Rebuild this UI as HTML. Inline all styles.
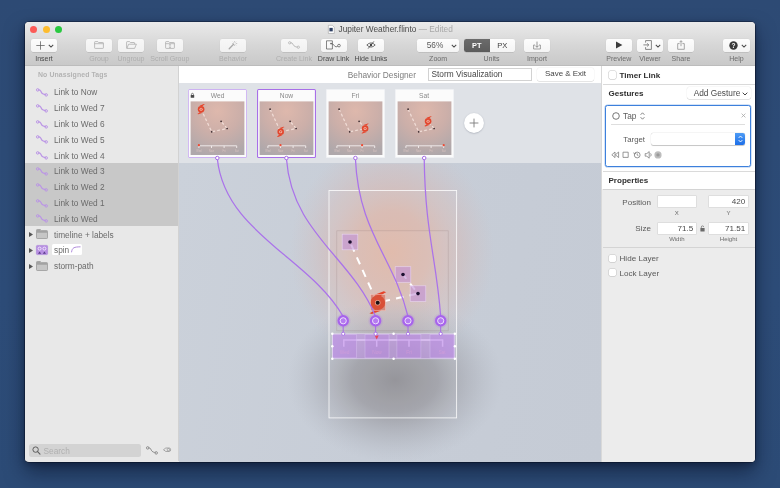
<!DOCTYPE html>
<html><head><meta charset="utf-8"><title>Jupiter Weather.flinto</title>
<style>
*{box-sizing:border-box;margin:0;padding:0}
html,body{width:780px;height:488px;overflow:hidden}
body{background:linear-gradient(180deg,#2d4a74 0%,#2d4c78 60%,#2c4b76 100%);font-family:"Liberation Sans",sans-serif;font-size:8.5px;color:#555;position:relative}
.a{position:absolute}
#win{left:25px;top:22px;width:730px;height:439.6px;border-radius:4px;background:#e9e9e9;box-shadow:0 0 0 .6px rgba(0,0,15,.6),0 10px 20px rgba(3,10,30,.5),0 2px 6px rgba(3,10,30,.35);overflow:hidden}
#in{left:-25px;top:-22px;width:780px;height:488px;will-change:transform}
#tb{left:25px;top:22px;width:730px;height:43.6px;background:linear-gradient(#eaeaea 0%,#d6d6d6 55%,#c9c9c9 100%);border-bottom:.6px solid #bcbcbc}
.tl{width:7.2px;height:7.2px;border-radius:50%;top:25.5px}
.btn{top:39px;height:12.6px;background:linear-gradient(#fdfdfd,#f4f4f4);border-radius:2.2px;box-shadow:0 .5px .6px rgba(0,0,0,.14),0 0 0 .4px rgba(0,0,0,.03)}
.btn.d{background:linear-gradient(#f7f7f7,#f1f1f1)}
.lbl{top:53.5px;width:70px;text-align:center;font-size:7.05px;color:#4a4a4a;white-space:nowrap;line-height:10px}
.lbl.d{color:#aeaeae}
.lbl.m{color:#6c6c6c}
#side{left:25px;top:65.6px;width:153.5px;height:395px;background:#e8e8e8;border-right:1px solid #d2d2d2}
.row{z-index:2;left:25px;width:153px;height:15.75px;line-height:16.4px;font-size:8.3px;color:#6a6a6a;padding-left:29px;white-space:nowrap}
#sel{left:25px;top:163.25px;width:153px;height:63px;background:#c8c8c8}
svg{position:absolute;overflow:visible}
.t{white-space:nowrap}
</style></head><body>
<div id="win" class="a"><div id="in" class="a">
<div id="tb" class="a"></div>
<div class="a tl" style="left:30.3px;background:#fc5b57"></div>
<div class="a tl" style="left:42.6px;background:#fdbc2e"></div>
<div class="a tl" style="left:54.6px;background:#29c940"></div>
<svg class="a" style="left:328.3px;top:24.8px" width="6.6" height="8.8" viewBox="0 0 6 8"><path d="M.3.3h3.7l1.7 1.7v5.7H.3z" fill="#fff" stroke="#9a9a9a" stroke-width=".5"/><rect x="1.3" y="2.6" width="3" height="3.2" fill="#2e3f63"/></svg>
<div class="a t" style="left:338.6px;top:24.2px;font-size:8.3px;color:#4c4c4c;line-height:11px">Jupiter Weather.flinto <span style="color:#a8a8a8">— Edited</span></div>
<div class="a btn" style="left:31px;width:26.0px"></div>
<div class="a lbl" style="left:9.0px">Insert</div>
<div class="a btn d" style="left:86px;width:26.0px"></div>
<div class="a lbl d" style="left:64.0px">Group</div>
<div class="a btn d" style="left:118px;width:26.0px"></div>
<div class="a lbl d" style="left:96.0px">Ungroup</div>
<div class="a btn d" style="left:156.5px;width:26.5px"></div>
<div class="a lbl d" style="left:134.8px">Scroll Group</div>
<div class="a btn d" style="left:220px;width:26.0px"></div>
<div class="a lbl d" style="left:198.0px">Behavior</div>
<div class="a btn d" style="left:281px;width:26.0px"></div>
<div class="a lbl d" style="left:259.0px">Create Link</div>
<div class="a btn" style="left:320.5px;width:26.0px"></div>
<div class="a lbl" style="left:298.5px">Draw Link</div>
<div class="a btn" style="left:357.7px;width:26.3px"></div>
<div class="a lbl" style="left:335.9px">Hide Links</div>
<div class="a btn" style="left:416.7px;width:42.8px"></div>
<div class="a lbl m" style="left:403.1px">Zoom</div>
<div class="a btn" style="left:464px;width:51.0px"></div>
<div class="a lbl m" style="left:456.5px">Units</div>
<div class="a btn" style="left:524px;width:26.0px"></div>
<div class="a lbl m" style="left:502.0px">Import</div>
<div class="a btn" style="left:605.6px;width:26.4px"></div>
<div class="a lbl m" style="left:583.8px">Preview</div>
<div class="a btn" style="left:637px;width:26.0px"></div>
<div class="a lbl m" style="left:615.0px">Viewer</div>
<div class="a btn" style="left:668px;width:26.0px"></div>
<div class="a lbl m" style="left:646.0px">Share</div>
<div class="a btn" style="left:723px;width:26.7px"></div>
<div class="a lbl m" style="left:701.4px">Help</div>
<svg class="a" style="left:35.50px;top:40.80px" width="9" height="9" viewBox="0 0 9 9"><path d="M4.5 .3V8.7M.3 4.5H8.7" stroke="#5e5e5e" stroke-width=".75"/></svg>
<svg class="a" style="left:48.30px;top:43.50px" width="6" height="4" viewBox="0 0 6 4"><path d="M.8.8L3 3L5.2.8" fill="none" stroke="#4a4a4a" stroke-width="1.05"/></svg>
<svg class="a" style="left:94.00px;top:41.20px" width="10" height="8" viewBox="0 0 10 8"><path d="M.6 1.2Q.6.6 1.2.6H3.8L4.6 1.5H8.8Q9.4 1.5 9.4 2.1V6.8Q9.4 7.4 8.8 7.4H1.2Q.6 7.4 .6 6.8ZM.6 2.7H9.4" fill="none" stroke="#a9a9a9" stroke-width=".75"/></svg>
<svg class="a" style="left:125.50px;top:41.20px" width="11" height="8" viewBox="0 0 11 8"><path d="M.9 7.4Q.6 7.4 .6 6.8V1.2Q.6.6 1.2.6H3.6L4.4 1.5H8Q8.6 1.5 8.6 2.1V3.2M.9 7.4L2.6 3.2H10.4L8.6 7.4Z" fill="none" stroke="#a9a9a9" stroke-width=".75" stroke-linejoin="round"/></svg>
<svg class="a" style="left:165.00px;top:41.20px" width="10" height="8" viewBox="0 0 10 8"><path d="M.6 1.2Q.6.6 1.2.6H3.8L4.6 1.5H8.8Q9.4 1.5 9.4 2.1V6.8Q9.4 7.4 8.8 7.4H1.2Q.6 7.4 .6 6.8ZM.6 2.7H9.4" fill="none" stroke="#a9a9a9" stroke-width=".75"/><path d="M5 3.4V6.8M3.9 4.3L5 3.3L6.1 4.3M3.9 5.9L5 6.9L6.1 5.9" fill="none" stroke="#a9a9a9" stroke-width=".6"/></svg>
<svg class="a" style="left:228.00px;top:40.20px" width="10" height="10" viewBox="0 0 10 10"><path d="M1.2 8.8L5.6 4.2" stroke="#a9a9a9" stroke-width="1.3" stroke-linecap="round"/><path d="M6.6 1V2.4M6.6 4.6V6M4.2 3.5H5.4M7.8 3.5H9.2M4.9 1.8L5.6 2.5M8.3 1.8L7.6 2.5M8.3 5.2L7.6 4.5" stroke="#a9a9a9" stroke-width=".6"/></svg>
<svg class="a" style="left:288.00px;top:41.20px" width="12" height="8" viewBox="0 0 12 8"><path d="M2.6 1.8C5.2 1.6 4.6 3.8 6 4.8S8.2 5.9 9.3 6.1" fill="none" stroke="#a9a9a9" stroke-width=".8"/><circle cx="1.7" cy="1.8" r="1.15" fill="none" stroke="#a9a9a9" stroke-width=".7"/><circle cx="10.3" cy="6.2" r="1.15" fill="none" stroke="#a9a9a9" stroke-width=".7"/></svg>
<svg class="a" style="left:326.30px;top:40.20px" width="15" height="10" viewBox="0 0 15 10"><path d="M.5 .8H6.4V9H.5Z" fill="none" stroke="#555" stroke-width=".7"/><path d="M5.2 3.6C8 3.4 8 6.8 10 6.8S11.2 6 11.8 5.8" fill="none" stroke="#555" stroke-width=".7"/><circle cx="13" cy="5.6" r="1.35" fill="none" stroke="#555" stroke-width=".7"/><circle cx="5" cy="3.6" r=".8" fill="#555"/></svg>
<svg class="a" style="left:366.00px;top:41.20px" width="10" height="8" viewBox="0 0 10 8"><path d="M.8 4Q5 -.2 9.2 4Q5 8.2 .8 4Z" fill="none" stroke="#444" stroke-width=".75"/><circle cx="5" cy="4" r="1.2" fill="#444"/><path d="M7.9 .4L2.1 7.6" stroke="#444" stroke-width=".8"/></svg>
<div class="a t" style="left:418px;top:40px;width:34px;text-align:center;font-size:8.3px;color:#5a5a5a;line-height:11px">56%</div>
<svg class="a" style="left:450.60px;top:43.50px" width="6" height="4" viewBox="0 0 6 4"><path d="M.8.8L3 3L5.2.8" fill="none" stroke="#4a4a4a" stroke-width="1.05"/></svg>
<div class="a t" style="left:464px;top:39px;width:25.7px;height:12.6px;border-radius:2.2px 0 0 2.2px;background:linear-gradient(#6b6b6b,#5c5c5c);color:#fff;font-weight:bold;font-size:7.4px;line-height:13.6px;text-align:center">PT</div>
<div class="a t" style="left:489.7px;top:39px;width:25.3px;height:12.6px;color:#3e3e3e;font-size:7.6px;line-height:13.6px;text-align:center">PX</div>
<svg class="a" style="left:533.00px;top:40.80px" width="8" height="9" viewBox="0 0 8 9"><path d="M.6 4V8H7.4V4M2 4H.6M6 4H7.4" fill="none" stroke="#7e7e7e" stroke-width=".7"/><path d="M4 .6V6.2M2.3 4.6L4 6.3L5.7 4.6" fill="none" stroke="#7e7e7e" stroke-width=".8"/></svg>
<svg class="a" style="left:615.00px;top:41.30px" width="8" height="8" viewBox="0 0 8 8"><path d="M1 .6L7.4 4L1 7.4Z" fill="#3c3c3c"/></svg>
<svg class="a" style="left:642.80px;top:40.30px" width="9" height="10" viewBox="0 0 9 10"><path d="M2.6 2.6V.6H8.4V9.4H2.6V7.2" fill="none" stroke="#6a6a6a" stroke-width=".8"/><path d="M.4 4.9H5.6M4.2 3.4L5.8 4.9L4.2 6.4" fill="none" stroke="#6a6a6a" stroke-width=".8"/></svg>
<svg class="a" style="left:654.60px;top:43.50px" width="6" height="4" viewBox="0 0 6 4"><path d="M.8.8L3 3L5.2.8" fill="none" stroke="#4a4a4a" stroke-width="1.05"/></svg>
<svg class="a" style="left:677.00px;top:40.00px" width="8" height="10" viewBox="0 0 8 10"><path d="M2.6 3.6H.7V9.3H7.3V3.6H5.4" fill="none" stroke="#8a8a8a" stroke-width=".75"/><path d="M4 6.2V.8M2.5 2.2L4 .7L5.5 2.2" fill="none" stroke="#8a8a8a" stroke-width=".75"/></svg>
<svg class="a" style="left:728.50px;top:40.80px" width="9" height="9" viewBox="0 0 9 9"><circle cx="4.5" cy="4.5" r="4.2" fill="#3a3a3a"/><text x="4.5" y="7" font-size="6.6" font-weight="bold" font-family="Liberation Sans,sans-serif" fill="#fff" text-anchor="middle">?</text></svg>
<svg class="a" style="left:741.30px;top:43.50px" width="6" height="4" viewBox="0 0 6 4"><path d="M.8.8L3 3L5.2.8" fill="none" stroke="#4a4a4a" stroke-width="1.05"/></svg>
<div id="side" class="a"></div><div id="sel" class="a"></div>
<div class="a t" style="left:38px;top:70px;font-size:6.9px;font-weight:bold;color:#b3b3b3;line-height:10px;letter-spacing:.1px">No Unassigned Tags</div>
<div class="a row" style="top:84.40px">Link to Now</div>
<div class="a row" style="top:100.20px">Link to Wed 7</div>
<div class="a row" style="top:116.00px">Link to Wed 6</div>
<div class="a row" style="top:131.80px">Link to Wed 5</div>
<div class="a row" style="top:147.60px">Link to Wed 4</div>
<div class="a row" style="top:163.40px">Link to Wed 3</div>
<div class="a row" style="top:179.20px">Link to Wed 2</div>
<div class="a row" style="top:195.00px">Link to Wed 1</div>
<div class="a row" style="top:210.80px">Link to Wed</div>
<div class="a row" style="top:226.60px">timeline + labels</div>
<div class="a row" style="top:242.40px">spin</div>
<div class="a row" style="top:258.20px">storm-path</div>
<svg class="a" style="left:36px;top:88.0px" width="12" height="9" viewBox="0 0 12 9"><path d="M2.6 1.8C5.2 1.6 4.6 4 6 5.2S8.2 6.3 9.3 6.6" fill="none" stroke="#bb95e6" stroke-width="1.2" stroke-linecap="round"/><circle cx="1.7" cy="1.9" r="1.25" fill="none" stroke="#bb95e6" stroke-width="1"/><circle cx="10.2" cy="6.9" r="1.25" fill="none" stroke="#bb95e6" stroke-width="1"/></svg>
<svg class="a" style="left:36px;top:103.8px" width="12" height="9" viewBox="0 0 12 9"><path d="M2.6 1.8C5.2 1.6 4.6 4 6 5.2S8.2 6.3 9.3 6.6" fill="none" stroke="#bb95e6" stroke-width="1.2" stroke-linecap="round"/><circle cx="1.7" cy="1.9" r="1.25" fill="none" stroke="#bb95e6" stroke-width="1"/><circle cx="10.2" cy="6.9" r="1.25" fill="none" stroke="#bb95e6" stroke-width="1"/></svg>
<svg class="a" style="left:36px;top:119.6px" width="12" height="9" viewBox="0 0 12 9"><path d="M2.6 1.8C5.2 1.6 4.6 4 6 5.2S8.2 6.3 9.3 6.6" fill="none" stroke="#bb95e6" stroke-width="1.2" stroke-linecap="round"/><circle cx="1.7" cy="1.9" r="1.25" fill="none" stroke="#bb95e6" stroke-width="1"/><circle cx="10.2" cy="6.9" r="1.25" fill="none" stroke="#bb95e6" stroke-width="1"/></svg>
<svg class="a" style="left:36px;top:135.4px" width="12" height="9" viewBox="0 0 12 9"><path d="M2.6 1.8C5.2 1.6 4.6 4 6 5.2S8.2 6.3 9.3 6.6" fill="none" stroke="#bb95e6" stroke-width="1.2" stroke-linecap="round"/><circle cx="1.7" cy="1.9" r="1.25" fill="none" stroke="#bb95e6" stroke-width="1"/><circle cx="10.2" cy="6.9" r="1.25" fill="none" stroke="#bb95e6" stroke-width="1"/></svg>
<svg class="a" style="left:36px;top:151.20000000000002px" width="12" height="9" viewBox="0 0 12 9"><path d="M2.6 1.8C5.2 1.6 4.6 4 6 5.2S8.2 6.3 9.3 6.6" fill="none" stroke="#bb95e6" stroke-width="1.2" stroke-linecap="round"/><circle cx="1.7" cy="1.9" r="1.25" fill="none" stroke="#bb95e6" stroke-width="1"/><circle cx="10.2" cy="6.9" r="1.25" fill="none" stroke="#bb95e6" stroke-width="1"/></svg>
<svg class="a" style="left:36px;top:167.0px" width="12" height="9" viewBox="0 0 12 9"><path d="M2.6 1.8C5.2 1.6 4.6 4 6 5.2S8.2 6.3 9.3 6.6" fill="none" stroke="#bb95e6" stroke-width="1.2" stroke-linecap="round"/><circle cx="1.7" cy="1.9" r="1.25" fill="none" stroke="#bb95e6" stroke-width="1"/><circle cx="10.2" cy="6.9" r="1.25" fill="none" stroke="#bb95e6" stroke-width="1"/></svg>
<svg class="a" style="left:36px;top:182.8px" width="12" height="9" viewBox="0 0 12 9"><path d="M2.6 1.8C5.2 1.6 4.6 4 6 5.2S8.2 6.3 9.3 6.6" fill="none" stroke="#bb95e6" stroke-width="1.2" stroke-linecap="round"/><circle cx="1.7" cy="1.9" r="1.25" fill="none" stroke="#bb95e6" stroke-width="1"/><circle cx="10.2" cy="6.9" r="1.25" fill="none" stroke="#bb95e6" stroke-width="1"/></svg>
<svg class="a" style="left:36px;top:198.6px" width="12" height="9" viewBox="0 0 12 9"><path d="M2.6 1.8C5.2 1.6 4.6 4 6 5.2S8.2 6.3 9.3 6.6" fill="none" stroke="#bb95e6" stroke-width="1.2" stroke-linecap="round"/><circle cx="1.7" cy="1.9" r="1.25" fill="none" stroke="#bb95e6" stroke-width="1"/><circle cx="10.2" cy="6.9" r="1.25" fill="none" stroke="#bb95e6" stroke-width="1"/></svg>
<svg class="a" style="left:36px;top:214.4px" width="12" height="9" viewBox="0 0 12 9"><path d="M2.6 1.8C5.2 1.6 4.6 4 6 5.2S8.2 6.3 9.3 6.6" fill="none" stroke="#bb95e6" stroke-width="1.2" stroke-linecap="round"/><circle cx="1.7" cy="1.9" r="1.25" fill="none" stroke="#bb95e6" stroke-width="1"/><circle cx="10.2" cy="6.9" r="1.25" fill="none" stroke="#bb95e6" stroke-width="1"/></svg>
<svg class="a" style="left:29.3px;top:231.90000000000003px" width="4" height="5" viewBox="0 0 4 5"><path d="M0 0L4 2.5L0 5Z" fill="#555"/></svg>
<svg class="a" style="left:36px;top:229.40000000000003px" width="12" height="10" viewBox="0 0 12 10"><path d="M.5 1.2Q.5.5 1.2.5H4.4L5.4 1.6H10.8Q11.5 1.6 11.5 2.3V8.8Q11.5 9.5 10.8 9.5H1.2Q.5 9.5 .5 8.8Z" fill="#c6c6c6" stroke="#9a9a9a" stroke-width=".8"/><path d="M.9 1.3Q.9.9 1.3.9H4.2L5.2 2H10.7Q11.1 2 11.1 2.4V3.8H.9Z" fill="#a2a2a2"/></svg>
<svg class="a" style="left:29.3px;top:247.70000000000002px" width="4" height="5" viewBox="0 0 4 5"><path d="M0 0L4 2.5L0 5Z" fill="#555"/></svg>
<svg class="a" style="left:29.3px;top:263.50000000000006px" width="4" height="5" viewBox="0 0 4 5"><path d="M0 0L4 2.5L0 5Z" fill="#555"/></svg>
<svg class="a" style="left:36px;top:261.00000000000006px" width="12" height="10" viewBox="0 0 12 10"><path d="M.5 1.2Q.5.5 1.2.5H4.4L5.4 1.6H10.8Q11.5 1.6 11.5 2.3V8.8Q11.5 9.5 10.8 9.5H1.2Q.5 9.5 .5 8.8Z" fill="#c6c6c6" stroke="#9a9a9a" stroke-width=".8"/><path d="M.9 1.3Q.9.9 1.3.9H4.2L5.2 2H10.7Q11.1 2 11.1 2.4V3.8H.9Z" fill="#a2a2a2"/></svg>
<svg class="a" style="left:36px;top:245.20000000000002px" width="12" height="10" viewBox="0 0 12 10"><rect x=".4" y=".4" width="11.2" height="9.2" rx="1" fill="#b78fe2" stroke="#a77fd6" stroke-width=".6"/><g fill="none" stroke="#f3eafc" stroke-width=".9"><circle cx="3.6" cy="3.6" r="1.5"/><circle cx="8.4" cy="3.6" r="1.5"/></g><path d="M2 8.8L3.6 6.4L5.2 8.8ZM6.8 8.8L8.4 6.4L10 8.8Z" fill="#5a3d8a"/></svg>
<div class="a" style="left:51.5px;top:244.3px;width:30.5px;height:11.2px;background:#fff;border-radius:1.5px"></div>
<svg class="a" style="left:71px;top:245.9px" width="10" height="7" viewBox="0 0 10 7"><path d="M.5 6.3C1.2 1.5 3 1 9.5 .8" fill="none" stroke="#a77fd6" stroke-width=".9"/></svg>
<div class="a" style="left:29.3px;top:444px;width:112px;height:12.6px;background:#d3d3d3;border-radius:2.5px"></div>
<svg class="a" style="left:32.3px;top:446.2px" width="9" height="9" viewBox="0 0 9 9"><circle cx="3.6" cy="3.6" r="2.7" fill="none" stroke="#5e5e5e" stroke-width="1"/><path d="M5.6 5.7L8 8.2" stroke="#5e5e5e" stroke-width="1.1" stroke-linecap="round"/></svg>
<div class="a t" style="left:43.5px;top:445.8px;font-size:8.3px;color:#b0b0b0;line-height:10px">Search</div>
<svg class="a" style="left:146px;top:446px" width="12" height="9" viewBox="0 0 12 9"><path d="M2.6 1.8C5.2 1.6 4.6 4 6 5.2S8.2 6.3 9.3 6.6" fill="none" stroke="#8e8e8e" stroke-width="1.0" stroke-linecap="round"/><circle cx="1.7" cy="1.9" r="1.25" fill="none" stroke="#8e8e8e" stroke-width="1"/><circle cx="10.2" cy="6.9" r="1.25" fill="none" stroke="#8e8e8e" stroke-width="1"/></svg>
<svg class="a" style="left:163.2px;top:447.4px" width="8.2" height="5.8" viewBox="0 0 10 7"><path d="M.6 3.3L3.4 1.2H7.6Q9.3 1.2 9.3 3.3T7.6 5.4H3.4Z" fill="none" stroke="#8e8e8e" stroke-width=".9" stroke-linejoin="round"/><circle cx="6.6" cy="3.3" r="1.5" fill="none" stroke="#8e8e8e" stroke-width=".8"/></svg>
<div class="a" style="left:178.5px;top:65.6px;width:423px;height:17.9px;background:#fff"></div>
<div class="a" style="left:178.5px;top:83.4px;width:423px;height:80px;background:#dfe2e7"></div>
<div class="a" id="cv" style="left:178.5px;top:163.4px;width:423px;height:299px;background:linear-gradient(100deg,#cbd1da 0%,#c7cdd7 50%,#c5cbd5 100%)"></div>
<div class="a t" style="left:316px;top:69.6px;width:100px;text-align:right;font-size:8.3px;color:#7d7d7d;line-height:11px">Behavior Designer</div>
<div class="a t" style="left:428px;top:67.9px;width:103.5px;height:13px;border:.6px solid #d2d2d2;background:#fff;font-size:8.3px;color:#444;line-height:11.8px;padding-left:2.5px">Storm Visualization</div>
<div class="a t" style="left:537px;top:68px;width:57px;height:12.8px;border-radius:2px;background:#fff;box-shadow:0 .4px .6px rgba(0,0,0,.16),0 0 0 .4px rgba(0,0,0,.06);font-size:7.95px;color:#444;line-height:12.8px;text-align:center">Save &amp; Exit</div>
<svg width="0" height="0" style="left:0;top:0"><defs><radialGradient id="tg" cx=".5" cy=".18" r=".85"><stop offset="0" stop-color="#deb8ac"/><stop offset=".5" stop-color="#ccafa9"/><stop offset="1" stop-color="#afa8ab"/></radialGradient></defs></svg>
<div class="a" style="left:188.2px;top:89px;width:59px;height:68.5px;background:#fbfbfb;border-radius:1.5px;box-shadow:inset 0 0 0 0.9px #cdb2f2"></div>
<div class="a t" style="left:188.2px;top:90.6px;width:59px;text-align:center;font-size:6.7px;color:#8a8a8a;line-height:10px">Wed</div>
<svg class="a" style="left:188.2px;top:89px" width="59" height="69" viewBox="0 0 59 69"><rect x="2.6" y="12.4" width="53.8" height="53.6" fill="url(#tg)"/><path d="M13.1 20.2L23.7 42.8L39.1 39.5L33.1 32.3" fill="none" stroke="#f0dcd6" stroke-width="1.25" stroke-dasharray="2.9 2.2"/><circle cx="23.7" cy="42.8" r=".85" fill="#3a2a2e"/><circle cx="33.1" cy="32.3" r=".85" fill="#3a2a2e"/><circle cx="39.1" cy="39.5" r=".85" fill="#3a2a2e"/><g transform="translate(13.1 20.2) scale(1.12)"><path d="M-1.5 -3.1L2.4 -4.55L3.35 -4.2C2.4 -3.8 1.7 -3.3 1.1 -2.5ZM1.5 3.1L-2.4 4.55L-3.35 4.2C-2.4 3.8 -1.7 3.3 -1.1 2.5Z" fill="#e8452c"/><circle r="2.95" fill="#e2472e"/><circle r="1.4" fill="#f3b3a3"/><circle r=".65" fill="#e2472e"/></g><path d="M10.9 59V56.8H48.7V59M23.5 56.8V59M36.1 56.8V59" fill="none" stroke="#f4eeee" stroke-width=".9"/><circle cx="10.9" cy="56.2" r="1.1" fill="#ee4a33"/><g fill="#d8c3c0" font-size="2.6" font-family="Liberation Sans,sans-serif" text-anchor="middle"><text x="10.9" y="63">Wed</text><text x="23.5" y="63">Now</text><text x="36.1" y="63">Fri</text><text x="48.7" y="63">Sat</text></g><rect x="2.7" y="6" width="3.5" height="2.8" rx=".4" fill="#4a4a4a"/><path d="M3.45 6V5.3a1 1 0 0 1 2 0V6" fill="none" stroke="#4a4a4a" stroke-width=".65"/></svg>
<div class="a" style="left:257px;top:89px;width:59px;height:68.5px;background:#fbfbfb;border-radius:1.5px;box-shadow:inset 0 0 0 1.1px #a86fe8"></div>
<div class="a t" style="left:257px;top:90.6px;width:59px;text-align:center;font-size:6.7px;color:#8a8a8a;line-height:10px">Now</div>
<svg class="a" style="left:257px;top:89px" width="59" height="69" viewBox="0 0 59 69"><rect x="2.6" y="12.4" width="53.8" height="53.6" fill="url(#tg)"/><path d="M13.1 20.2L23.7 42.8L39.1 39.5L33.1 32.3" fill="none" stroke="#f0dcd6" stroke-width="1.25" stroke-dasharray="2.9 2.2"/><circle cx="13.1" cy="20.2" r=".85" fill="#3a2a2e"/><circle cx="33.1" cy="32.3" r=".85" fill="#3a2a2e"/><circle cx="39.1" cy="39.5" r=".85" fill="#3a2a2e"/><g transform="translate(23.7 42.8) scale(1.12)"><path d="M-1.5 -3.1L2.4 -4.55L3.35 -4.2C2.4 -3.8 1.7 -3.3 1.1 -2.5ZM1.5 3.1L-2.4 4.55L-3.35 4.2C-2.4 3.8 -1.7 3.3 -1.1 2.5Z" fill="#e8452c"/><circle r="2.95" fill="#e2472e"/><circle r="1.4" fill="#f3b3a3"/><circle r=".65" fill="#e2472e"/></g><path d="M10.9 59V56.8H48.7V59M23.5 56.8V59M36.1 56.8V59" fill="none" stroke="#f4eeee" stroke-width=".9"/><circle cx="23.5" cy="56.2" r="1.1" fill="#ee4a33"/><g fill="#d8c3c0" font-size="2.6" font-family="Liberation Sans,sans-serif" text-anchor="middle"><text x="10.9" y="63">Wed</text><text x="23.5" y="63">Now</text><text x="36.1" y="63">Fri</text><text x="48.7" y="63">Sat</text></g></svg>
<div class="a" style="left:325.8px;top:89px;width:59px;height:68.5px;background:#fbfbfb;border-radius:1.5px;box-shadow:inset 0 0 0 0.7px #eceef2"></div>
<div class="a t" style="left:325.8px;top:90.6px;width:59px;text-align:center;font-size:6.7px;color:#8a8a8a;line-height:10px">Fri</div>
<svg class="a" style="left:325.8px;top:89px" width="59" height="69" viewBox="0 0 59 69"><rect x="2.6" y="12.4" width="53.8" height="53.6" fill="url(#tg)"/><path d="M13.1 20.2L23.7 42.8L39.1 39.5L33.1 32.3" fill="none" stroke="#f0dcd6" stroke-width="1.25" stroke-dasharray="2.9 2.2"/><circle cx="13.1" cy="20.2" r=".85" fill="#3a2a2e"/><circle cx="23.7" cy="42.8" r=".85" fill="#3a2a2e"/><circle cx="33.1" cy="32.3" r=".85" fill="#3a2a2e"/><g transform="translate(39.1 39.5) scale(1.12)"><path d="M-1.5 -3.1L2.4 -4.55L3.35 -4.2C2.4 -3.8 1.7 -3.3 1.1 -2.5ZM1.5 3.1L-2.4 4.55L-3.35 4.2C-2.4 3.8 -1.7 3.3 -1.1 2.5Z" fill="#e8452c"/><circle r="2.95" fill="#e2472e"/><circle r="1.4" fill="#f3b3a3"/><circle r=".65" fill="#e2472e"/></g><path d="M10.9 59V56.8H48.7V59M23.5 56.8V59M36.1 56.8V59" fill="none" stroke="#f4eeee" stroke-width=".9"/><circle cx="36.1" cy="56.2" r="1.1" fill="#ee4a33"/><g fill="#d8c3c0" font-size="2.6" font-family="Liberation Sans,sans-serif" text-anchor="middle"><text x="10.9" y="63">Wed</text><text x="23.5" y="63">Now</text><text x="36.1" y="63">Fri</text><text x="48.7" y="63">Sat</text></g></svg>
<div class="a" style="left:394.6px;top:89px;width:59px;height:68.5px;background:#fbfbfb;border-radius:1.5px;box-shadow:inset 0 0 0 0.7px #eceef2"></div>
<div class="a t" style="left:394.6px;top:90.6px;width:59px;text-align:center;font-size:6.7px;color:#8a8a8a;line-height:10px">Sat</div>
<svg class="a" style="left:394.6px;top:89px" width="59" height="69" viewBox="0 0 59 69"><rect x="2.6" y="12.4" width="53.8" height="53.6" fill="url(#tg)"/><path d="M13.1 20.2L23.7 42.8L39.1 39.5L33.1 32.3" fill="none" stroke="#f0dcd6" stroke-width="1.25" stroke-dasharray="2.9 2.2"/><circle cx="13.1" cy="20.2" r=".85" fill="#3a2a2e"/><circle cx="23.7" cy="42.8" r=".85" fill="#3a2a2e"/><circle cx="39.1" cy="39.5" r=".85" fill="#3a2a2e"/><g transform="translate(33.1 32.3) scale(1.12)"><path d="M-1.5 -3.1L2.4 -4.55L3.35 -4.2C2.4 -3.8 1.7 -3.3 1.1 -2.5ZM1.5 3.1L-2.4 4.55L-3.35 4.2C-2.4 3.8 -1.7 3.3 -1.1 2.5Z" fill="#e8452c"/><circle r="2.95" fill="#e2472e"/><circle r="1.4" fill="#f3b3a3"/><circle r=".65" fill="#e2472e"/></g><path d="M10.9 59V56.8H48.7V59M23.5 56.8V59M36.1 56.8V59" fill="none" stroke="#f4eeee" stroke-width=".9"/><circle cx="48.699999999999996" cy="56.2" r="1.1" fill="#ee4a33"/><g fill="#d8c3c0" font-size="2.6" font-family="Liberation Sans,sans-serif" text-anchor="middle"><text x="10.9" y="63">Wed</text><text x="23.5" y="63">Now</text><text x="36.1" y="63">Fri</text><text x="48.7" y="63">Sat</text></g></svg>
<div class="a" style="left:463.6px;top:112.6px;width:20.8px;height:20.8px;border-radius:50%;background:#fff;box-shadow:0 .5px 1.5px rgba(60,70,90,.35)"></div>
<svg class="a" style="left:469px;top:118px" width="10" height="10" viewBox="0 0 10 10"><path d="M5 .6V9.4M.6 5H9.4" stroke="#7a7a7a" stroke-width=".9"/></svg>
<svg class="a" style="left:0;top:0" width="780" height="488" viewBox="0 0 780 488"><defs><radialGradient id="g1"><stop offset="0" stop-color="#e0b5a4" stop-opacity=".95"/><stop offset=".35" stop-color="#dcb5a8" stop-opacity=".82"/><stop offset=".7" stop-color="#d6b8b4" stop-opacity=".42"/><stop offset="1" stop-color="#d2bebe" stop-opacity="0"/></radialGradient><radialGradient id="g2"><stop offset="0" stop-color="#8c8b90" stop-opacity=".92"/><stop offset=".4" stop-color="#929197" stop-opacity=".72"/><stop offset=".75" stop-color="#a2a4ac" stop-opacity=".32"/><stop offset="1" stop-color="#b0b4be" stop-opacity="0"/></radialGradient><radialGradient id="g3"><stop offset="0" stop-color="#a660ea" stop-opacity=".45"/><stop offset=".6" stop-color="#a660ea" stop-opacity=".35"/><stop offset="1" stop-color="#a660ea" stop-opacity="0"/></radialGradient><clipPath id="cc"><rect x="178.5" y="163.4" width="423" height="299"/></clipPath></defs><g clip-path="url(#cc)"><ellipse cx="392" cy="252" rx="102" ry="114" fill="url(#g1)"/><ellipse cx="395" cy="380" rx="108" ry="82" fill="url(#g2)"/><rect x="329" y="190.5" width="127.6" height="227.4" fill="#fff" fill-opacity=".05" stroke="#fff" stroke-opacity=".85" stroke-width=".9"/><rect x="336.8" y="230.8" width="111.4" height="100" fill="#fff" fill-opacity=".03" stroke="#8a7478" stroke-opacity=".3" stroke-width=".7"/></g><path d="M350 242L377.2 302.7L418 293.6L403 274.5" fill="none" stroke="#fff" stroke-width="2" stroke-dasharray="7.6 6.2" stroke-dashoffset="-3"/><g transform="translate(377.8 302.7) scale(2.5)"><path d="M-1.5 -3.1L2.4 -4.55L3.35 -4.2C2.4 -3.8 1.7 -3.3 1.1 -2.5ZM1.5 3.1L-2.4 4.55L-3.35 4.2C-2.4 3.8 -1.7 3.3 -1.1 2.5Z" fill="#e6442a"/><circle r="2.95" fill="#dc4a31"/></g><rect x="342.2" y="234.2" width="15.6" height="15.6" fill="#c292d6" fill-opacity=".62" stroke="#ead6f2" stroke-opacity=".85" stroke-width=".7"/><circle cx="350" cy="242" r="1.8" fill="#1c1030"/><rect x="395.2" y="266.7" width="15.6" height="15.6" fill="#c292d6" fill-opacity=".62" stroke="#ead6f2" stroke-opacity=".85" stroke-width=".7"/><circle cx="403" cy="274.5" r="1.8" fill="#1c1030"/><rect x="410.2" y="285.8" width="15.6" height="15.6" fill="#c292d6" fill-opacity=".62" stroke="#ead6f2" stroke-opacity=".85" stroke-width=".7"/><circle cx="418" cy="293.6" r="1.8" fill="#1c1030"/><rect x="370.59999999999997" y="294.5" width="15" height="16.2" fill="#d6563e" fill-opacity=".5" stroke="#f3c9c0" stroke-opacity=".8" stroke-width=".7"/><circle cx="377.7" cy="302.7" r="2.7" fill="#e6a995"/><circle cx="377.7" cy="302.7" r="2" fill="#1a1014"/><path d="M343.8 346.8V339.9H442.6V346.8M376.7 339.9V346.8M409 339.9V346.8" fill="none" stroke="#fff" stroke-width="1.5"/><rect x="332.3" y="333.8" width="122.6" height="25" fill="#c494ee" fill-opacity=".55"/><rect x="332.6" y="334.5" width="24" height="23.4" fill="#b57fe4" fill-opacity=".3" stroke="#dcc4f4" stroke-opacity=".7" stroke-width=".6"/><rect x="365" y="334.5" width="24" height="23.4" fill="#b57fe4" fill-opacity=".3" stroke="#dcc4f4" stroke-opacity=".7" stroke-width=".6"/><rect x="396.9" y="334.5" width="24" height="23.4" fill="#b57fe4" fill-opacity=".3" stroke="#dcc4f4" stroke-opacity=".7" stroke-width=".6"/><rect x="430" y="334.5" width="24" height="23.4" fill="#b57fe4" fill-opacity=".3" stroke="#dcc4f4" stroke-opacity=".7" stroke-width=".6"/><path d="M374.7 335.6L378.7 335.6L376.7 339.4Z" fill="#ea4558"/><g fill="#eaa4d8" fill-opacity=".4" font-size="4.8" font-family="Liberation Sans,sans-serif" text-anchor="middle"><text x="344.6" y="354.2">Wed</text><text x="377" y="354.2">Now</text><text x="409" y="354.2">Fri</text><text x="442" y="354.2">Sat</text></g><rect x="332.3" y="333.8" width="122.6" height="25" fill="none" stroke="#f3eafc" stroke-opacity=".8" stroke-width=".6"/><circle cx="332.3" cy="333.8" r="1.25" fill="#fff"/><circle cx="393.6" cy="333.8" r="1.25" fill="#fff"/><circle cx="454.9" cy="333.8" r="1.25" fill="#fff"/><circle cx="332.3" cy="346.3" r="1.25" fill="#fff"/><circle cx="454.9" cy="346.3" r="1.25" fill="#fff"/><circle cx="332.3" cy="358.8" r="1.25" fill="#fff"/><circle cx="393.6" cy="358.8" r="1.25" fill="#fff"/><circle cx="454.9" cy="358.8" r="1.25" fill="#fff"/><path d="M217.3 158.5C224.9 232.8 309.2 257.2 343.2 316.5" fill="none" stroke="#aa72ea" stroke-width="1.25"/><circle cx="217.3" cy="158" r="1.75" fill="#fff" stroke="#a66ce6" stroke-width="1"/><path d="M343.2 325V333" stroke="#a66ce6" stroke-width="1"/><circle cx="343.2" cy="320.8" r="8" fill="url(#g3)"/><circle cx="343.2" cy="320.8" r="5.7" fill="#a763ec"/><circle cx="343.2" cy="320.8" r="3.1" fill="#b57cf0" stroke="#eddffc" stroke-width="1"/><circle cx="343.2" cy="333.8" r="1.6" fill="#fff" stroke="#a66ce6" stroke-width=".9"/><path d="M286.4 158.5C291.8 232.8 351.5 257.2 375.6 316.5" fill="none" stroke="#aa72ea" stroke-width="1.25"/><circle cx="286.4" cy="158" r="1.75" fill="#fff" stroke="#a66ce6" stroke-width="1"/><path d="M375.6 325V333" stroke="#a66ce6" stroke-width="1"/><circle cx="375.6" cy="320.8" r="8" fill="url(#g3)"/><circle cx="375.6" cy="320.8" r="5.7" fill="#a763ec"/><circle cx="375.6" cy="320.8" r="3.1" fill="#b57cf0" stroke="#eddffc" stroke-width="1"/><circle cx="375.6" cy="333.8" r="1.6" fill="#fff" stroke="#a66ce6" stroke-width=".9"/><path d="M355.4 158.5C358.6 232.8 393.8 257.2 408 316.5" fill="none" stroke="#aa72ea" stroke-width="1.25"/><circle cx="355.4" cy="158" r="1.75" fill="#fff" stroke="#a66ce6" stroke-width="1"/><path d="M408 325V333" stroke="#a66ce6" stroke-width="1"/><circle cx="408" cy="320.8" r="8" fill="url(#g3)"/><circle cx="408" cy="320.8" r="5.7" fill="#a763ec"/><circle cx="408" cy="320.8" r="3.1" fill="#b57cf0" stroke="#eddffc" stroke-width="1"/><circle cx="408" cy="333.8" r="1.6" fill="#fff" stroke="#a66ce6" stroke-width=".9"/><path d="M424.2 158.5C425.2 232.8 436.2 257.2 440.7 316.5" fill="none" stroke="#aa72ea" stroke-width="1.25"/><circle cx="424.2" cy="158" r="1.75" fill="#fff" stroke="#a66ce6" stroke-width="1"/><path d="M440.7 325V333" stroke="#a66ce6" stroke-width="1"/><circle cx="440.7" cy="320.8" r="8" fill="url(#g3)"/><circle cx="440.7" cy="320.8" r="5.7" fill="#a763ec"/><circle cx="440.7" cy="320.8" r="3.1" fill="#b57cf0" stroke="#eddffc" stroke-width="1"/><circle cx="440.7" cy="333.8" r="1.6" fill="#fff" stroke="#a66ce6" stroke-width=".9"/></svg>
<div class="a" style="left:601.2px;top:65.6px;width:153.8px;height:396px;background:#ececec;border-left:1px solid #d9d9d9"></div>
<div class="a" style="left:602.2px;top:65.6px;width:152.8px;height:123.4px;background:#fff"></div>
<div class="a" style="left:603px;top:83.6px;width:152px;height:.8px;background:#dadada"></div>
<div class="a" style="left:603px;top:170.6px;width:152px;height:.8px;background:#dadada"></div>
<div class="a" style="left:603px;top:188.6px;width:152px;height:.8px;background:#d4d4d4"></div>
<div class="a" style="left:603px;top:247px;width:152px;height:.8px;background:#d4d4d4"></div>
<div class="a" style="left:608.6px;top:71.2px;width:7.8px;height:7.8px;border-radius:1.4px;background:#fff;box-shadow:0 0 0 .5px #c4c4c4,0 .4px .5px rgba(0,0,0,.1)"></div>
<div class="a t" style="left:619.6px;top:70.2px;font-size:8.05px;font-weight:bold;color:#2e2e2e;line-height:11px">Timer Link</div>
<div class="a t" style="left:608.5px;top:87.9px;font-size:8.05px;font-weight:bold;color:#2e2e2e;line-height:11px">Gestures</div>
<div class="a t" style="left:687.2px;top:87px;width:63.4px;height:12.4px;border-radius:2.2px;background:#fff;box-shadow:0 .4px .6px rgba(0,0,0,.17),0 0 0 .4px rgba(0,0,0,.06);font-size:8.3px;color:#4a4a4a;line-height:12.6px;padding-left:6.5px">Add Gesture</div>
<svg class="a" style="left:741.5px;top:91.5px" width="6" height="4" viewBox="0 0 6 4"><path d="M.7.7L3 3L5.3.7" fill="none" stroke="#444" stroke-width="1"/></svg>
<div class="a" style="left:605.4px;top:104.6px;width:145.4px;height:62.3px;border-radius:2.6px;background:#fff;border:1px solid #3d80dc;box-shadow:0 0 0 .5px rgba(61,128,220,.45)"></div>
<svg class="a" style="left:611.6px;top:112px" width="8" height="8" viewBox="0 0 8 8"><circle cx="4" cy="4" r="3.3" fill="none" stroke="#555" stroke-width=".8"/></svg>
<div class="a t" style="left:623px;top:110.6px;font-size:8.3px;color:#5e5e5e;line-height:11px">Tap</div>
<svg class="a" style="left:640px;top:112px" width="5" height="8" viewBox="0 0 5 8"><path d="M.6 2.8L2.5.8L4.4 2.8M.6 5.2L2.5 7.2L4.4 5.2" fill="none" stroke="#666" stroke-width=".8"/></svg>
<svg class="a" style="left:741px;top:113px" width="5" height="5" viewBox="0 0 5 5"><path d="M.6.6L4.4 4.4M4.4.6L.6 4.4" stroke="#a8a8a8" stroke-width=".8"/></svg>
<div class="a" style="left:611px;top:124.3px;width:134px;height:.7px;background:#dedede"></div>
<div class="a t" style="left:600px;top:133.6px;width:45px;text-align:right;font-size:7.8px;color:#5a5a5a;line-height:11px">Target</div>
<div class="a" style="left:651px;top:133.2px;width:94px;height:12.2px;border-radius:2.2px;background:#fff;box-shadow:0 .4px .7px rgba(0,0,0,.2),0 0 0 .4px rgba(0,0,0,.07)"></div>
<div class="a" style="left:735px;top:133.2px;width:10px;height:12.2px;border-radius:0 2.2px 2.2px 0;background:linear-gradient(#4d9bf5,#1e6fe8)"></div>
<svg class="a" style="left:737.5px;top:135.4px" width="5" height="8" viewBox="0 0 5 8"><path d="M.7 2.9L2.5 1L4.3 2.9M.7 5.1L2.5 7L4.3 5.1" fill="none" stroke="#fff" stroke-width=".9"/></svg>
<svg class="a" style="left:611px;top:150px" width="52" height="10" viewBox="0 0 52 10"><g fill="none" stroke="#7d7d7d" stroke-width=".8" stroke-linejoin="round"><path d="M4 2L.8 4.8L4 7.6ZM7.6 2L4.4 4.8L7.6 7.6Z"/><rect x="12" y="2.2" width="5.2" height="5.2"/><circle cx="26.2" cy="5" r="2.9"/><path d="M26.2 3.4V5.1L27.5 5.9M22.6 2.6L23.6 4.2L25 3"/><path d="M34.2 3.6H35.8L38.2 1.6V8.2L35.8 6.2H34.2ZM39.6 3.4Q40.8 4.9 39.6 6.4"/></g><circle cx="47" cy="4.9" r="3.6" fill="#bdbdbd"/><circle cx="47" cy="4.9" r="1.7" fill="#9a9a9a"/></svg>
<div class="a t" style="left:608.5px;top:175.2px;font-size:8.05px;font-weight:bold;color:#2e2e2e;line-height:11px">Properties</div>
<div class="a t" style="left:601px;top:196.6px;width:50px;text-align:right;font-size:8.05px;color:#5a5a5a;line-height:11px">Position</div>
<div class="a t" style="left:657.5px;top:196.1px;width:38.6px;height:11.4px;background:#fff;box-shadow:0 0 0 .5px #cfcfcf;font-size:8.1px;color:#4a4a4a;line-height:12.6px;text-align:right;padding-right:2.8px"></div>
<div class="a t" style="left:709px;top:196.1px;width:39px;height:11.4px;background:#fff;box-shadow:0 0 0 .5px #cfcfcf;font-size:8.1px;color:#4a4a4a;line-height:12.6px;text-align:right;padding-right:2.8px">420</div>
<div class="a t" style="left:656.8px;top:207.6px;width:40px;text-align:center;font-size:6px;color:#6a6a6a;line-height:11px">X</div>
<div class="a t" style="left:708.5px;top:207.6px;width:40px;text-align:center;font-size:6px;color:#6a6a6a;line-height:11px">Y</div>
<div class="a t" style="left:601px;top:223px;width:50px;text-align:right;font-size:8.05px;color:#5a5a5a;line-height:11px">Size</div>
<div class="a t" style="left:657.5px;top:222.5px;width:38.6px;height:11.4px;background:#fff;box-shadow:0 0 0 .5px #cfcfcf;font-size:8.1px;color:#4a4a4a;line-height:12.6px;text-align:right;padding-right:2.8px">71.5</div>
<div class="a t" style="left:709px;top:222.5px;width:39px;height:11.4px;background:#fff;box-shadow:0 0 0 .5px #cfcfcf;font-size:8.1px;color:#4a4a4a;line-height:12.6px;text-align:right;padding-right:2.8px">71.51</div>
<div class="a t" style="left:656.8px;top:233.6px;width:40px;text-align:center;font-size:6px;color:#6a6a6a;line-height:11px">Width</div>
<div class="a t" style="left:708.5px;top:233.6px;width:40px;text-align:center;font-size:6px;color:#6a6a6a;line-height:11px">Height</div>
<svg class="a" style="left:700.4px;top:225px" width="5" height="7" viewBox="0 0 5 7"><rect x=".4" y="3" width="4.2" height="3.4" rx=".5" fill="#6a6a6a"/><path d="M1.3 3V2.1a1.2 1.2 0 0 1 2.4 0" fill="none" stroke="#6a6a6a" stroke-width=".7"/></svg>
<div class="a" style="left:608.6px;top:254.5px;width:7.8px;height:7.8px;border-radius:1.4px;background:#fff;box-shadow:0 0 0 .5px #c4c4c4,0 .4px .5px rgba(0,0,0,.1)"></div>
<div class="a t" style="left:619.5px;top:253.1px;width:60px;text-align:left;font-size:8.1px;color:#5a5a5a;line-height:11px">Hide Layer</div>
<div class="a" style="left:608.6px;top:268.6px;width:7.8px;height:7.8px;border-radius:1.4px;background:#fff;box-shadow:0 0 0 .5px #c4c4c4,0 .4px .5px rgba(0,0,0,.1)"></div>
<div class="a t" style="left:619.5px;top:267.7px;width:60px;text-align:left;font-size:8.1px;color:#5a5a5a;line-height:11px">Lock Layer</div>
</div></div></body></html>
